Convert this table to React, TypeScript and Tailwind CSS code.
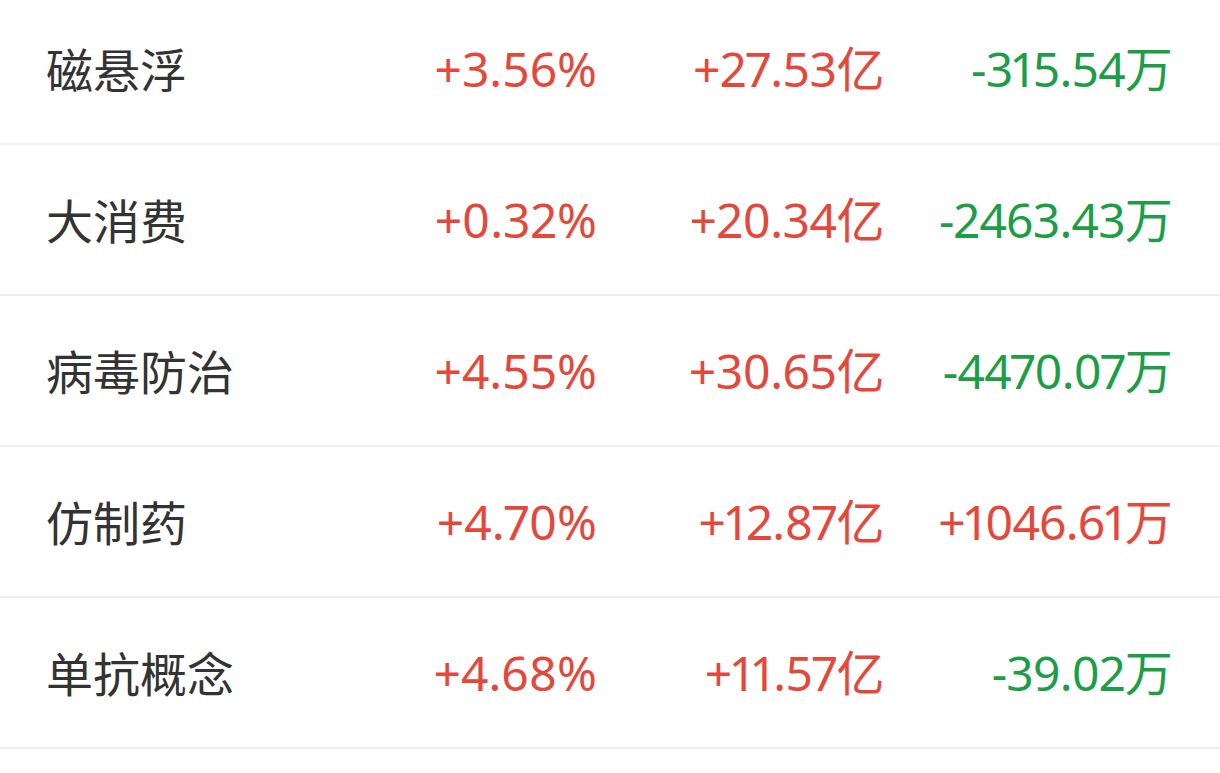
import React from "react"

type Row = {
  name: string
  change: string
  amount: string
  flow: string
  flowUp: boolean
}

const rows: Row[] = [
  { name: "磁悬浮", change: "+3.56%", amount: "+27.53亿", flow: "-315.54万", flowUp: false },
  { name: "大消费", change: "+0.32%", amount: "+20.34亿", flow: "-2463.43万", flowUp: false },
  { name: "病毒防治", change: "+4.55%", amount: "+30.65亿", flow: "-4470.07万", flowUp: false },
  { name: "仿制药", change: "+4.70%", amount: "+12.87亿", flow: "+1046.61万", flowUp: true },
  { name: "单抗概念", change: "+4.68%", amount: "+11.57亿", flow: "-39.02万", flowUp: false },
]

const numFont = "proportional-nums [font-family:'Noto_Sans','Noto_Sans_CJK_SC',sans-serif]"

export default function App() {
  return (
    <div className="w-[1220px] h-[773px] overflow-hidden bg-white">
      <div className="-mt-[6px]">
        {rows.map((row) => (
          <div
            key={row.name}
            className="h-[151px] flex items-center border-b-2 border-[#f0f0f0] pl-[46px] pr-[48px]"
          >
            <div className="flex-1 text-[47px] text-[#333333] [font-family:'Noto_Sans_CJK_SC',sans-serif]">
              {row.name}
            </div>
            <div className={`w-[260px] text-right text-[48px] text-[#e5483a] ${numFont}`}>
              {row.change}
            </div>
            <div className={`w-[287px] text-right text-[48px] tracking-[-0.5px] text-[#e5483a] ${numFont}`}>
              {row.amount}
            </div>
            <div
              className={`w-[288px] text-right text-[48px] tracking-[-0.8px] ${numFont} ${
                row.flowUp ? "text-[#e5483a]" : "text-[#1c9e47]"
              }`}
            >
              {row.flow}
            </div>
          </div>
        ))}
      </div>
    </div>
  )
}
